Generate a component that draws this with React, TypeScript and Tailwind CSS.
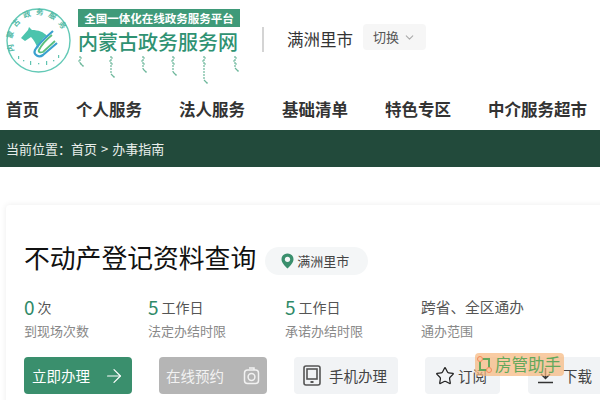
import { Star, ArrowRight, ChevronDown } from 'lucide-react';

const font = { fontFamily: '"Noto Sans CJK SC", "Liberation Sans", sans-serif' };

const navItems = ['个人服务', '法人服务', '基础清单', '特色专区', '中介服务超市'];

const stats = [
  { num: '0', unit: '次', label: '到现场次数', width: 'w-[124px]' },
  { num: '5', unit: '工作日', label: '法定办结时限', width: 'w-[137px]' },
  { num: '5', unit: '工作日', label: '承诺办结时限', width: 'w-[136px]' },
];

function Logo() {
  return (
    <svg width="74" height="80" viewBox="0 0 74 80" className="shrink-0">
      <defs>
        <path id="ring" d="M14 52 A26 26 0 1 1 61 52" fill="none" />
      </defs>
      <circle cx="37.5" cy="40.5" r="31.5" fill="none" stroke="#63c9b6" strokeWidth="1.4" />
      <text fontSize="7.5" fontWeight="700" fill="#4fb8a4" letterSpacing="4.6" style={font}>
        <textPath href="#ring" startOffset="1%">内蒙古政务服务</textPath>
      </text>
      <path d="M20 38 L27 30 L28 27 L31 30 C37 30 43 32 46 36 C41 38 39 42 37 49 C35 44 33 40 30 37 L24 41 Z" fill="#4cc4ad" />
      <path d="M52 31 C45 37 38 43 34 50 C32 55 38 58 42 55 L56 43" fill="none" stroke="#3aa0cf" strokeWidth="2.2" />
      <path d="M51 35 C46 39 41 44 38 50 C37 52 39 53 42 52 L54 41" fill="none" stroke="#58bf7d" strokeWidth="1.8" />
      <g fill="#62c4b1">
        <rect x="17" y="56" width="1.2" height="3" />
        <rect x="22" y="60" width="1.3" height="1.3" />
        <rect x="29" y="61" width="1.2" height="4" />
        <rect x="37" y="63" width="1.3" height="1.3" />
        <rect x="45" y="61" width="1.2" height="4" />
        <rect x="52" y="60" width="1.3" height="1.3" />
        <rect x="57" y="55" width="1.2" height="3" />
      </g>
    </svg>
  );
}

function MongolianMarks() {
  const marks = [
    { x: 2, h: 12 },
    { x: 33, h: 23 },
    { x: 65, h: 18 },
    { x: 95, h: 21 },
    { x: 126, h: 29 },
    { x: 157, h: 17 },
  ];
  return (
    <svg width="162" height="30" viewBox="0 0 162 30" className="block">
      {marks.map((m) => (
        <g key={m.x} stroke="#6db79b" strokeWidth="1.2" fill="none">
          <path d={`M${m.x} 1 V${m.h - 4}`} strokeDasharray="2 1" />
          <path d={`M${m.x} 3 h2 M${m.x} 6 h-2 M${m.x} 9 h2 M${m.x} ${m.h - 4} l3 3 M${m.x + 2} ${m.h - 1} h2`} />
        </g>
      ))}
    </svg>
  );
}

function CameraMark() {
  return (
    <svg width="17" height="18" viewBox="0 0 17 18" fill="none" stroke="#f2f2f2" strokeWidth="1.5">
      <rect x="1.5" y="3" width="14" height="13.5" rx="3" />
      <circle cx="8.5" cy="10" r="3.4" />
      <path d="M6 1 h5 v2" />
    </svg>
  );
}

function TabletMark() {
  return (
    <svg width="18" height="21" viewBox="0 0 18 21" fill="none" stroke="#555" strokeWidth="1.6">
      <rect x="1" y="1" width="16" height="19" rx="2" />
      <rect x="4" y="4" width="10" height="10" />
      <path d="M7.5 17 h3" strokeWidth="2" />
    </svg>
  );
}

function DownloadMark() {
  return (
    <svg width="17" height="17" viewBox="0 0 17 17" fill="none" stroke="#333" strokeWidth="1.5">
      <path d="M8.5 1 V11 M4 7 L8.5 11.5 L13 7" />
      <path d="M1 15.5 H16" />
    </svg>
  );
}

export default function App() {
  return (
    <div className="w-[600px] h-[400px] overflow-hidden bg-white relative" style={font}>
      <header className="h-[90px] flex items-start overflow-hidden">
        <div className="pl-[1px]">
          <Logo />
        </div>
        <div className="ml-[3px] pt-[9px] w-[162px] shrink-0">
          <div className="h-[18px] bg-[#3f9a79] text-white text-[11.5px] font-bold leading-[18px] text-center whitespace-nowrap">
            全国一体化在线政务服务平台
          </div>
          <div className="mt-[3px] text-[20px] leading-[24px] font-medium text-[#2f9272] whitespace-nowrap">内蒙古政务服务网</div>
          <div className="mt-[1px]">
            <MongolianMarks />
          </div>
        </div>
        <div className="ml-[22px] mt-[27px] w-[2px] h-[25px] bg-[#d4d4d4]" />
        <div className="ml-[23px] mt-[26px] text-[16.5px] leading-[26px] text-[#333] whitespace-nowrap">满洲里市</div>
        <div className="ml-[10px] mt-[24px] w-[63px] h-[26px] rounded bg-[#f6f6f6] flex items-center pl-[10px] gap-[4px] text-[13px] text-[#555]">
          切换
          <ChevronDown size={13} color="#aaa" />
        </div>
      </header>

      <nav className="h-[40px] flex items-center pl-[6px] pb-[2px] gap-[37px] text-[16.5px] font-bold text-[#333] whitespace-nowrap">
        <span>首页</span>
        {navItems.map((item) => (
          <span key={item}>{item}</span>
        ))}
      </nav>

      <div className="h-[37px] bg-[#224a3b] flex items-center pl-[6px] text-[13px] text-[#e8eeeb] whitespace-nowrap">
        <span>当前位置：</span>
        <span>首页</span>
        <span className="mx-[4px]">&gt;</span>
        <span>办事指南</span>
      </div>

      <main className="mt-[38px] ml-[6px] w-[620px] h-[220px] bg-white rounded-sm shadow-[0_0_6px_rgba(0,0,0,0.08)] pl-[18px] pt-[42px]">
        <div className="flex items-start h-[28px]">
          <h1 className="text-[25.8px] leading-[20px] text-[#111] whitespace-nowrap">不动产登记资料查询</h1>
          <div className="ml-[9px] w-[103px] h-[28px] rounded-full bg-[#f4f6f7] flex items-center pl-[16px] gap-[3px] text-[13px] text-[#444] whitespace-nowrap">
            <svg width="13" height="16" viewBox="0 0 13 16" className="shrink-0">
              <path d="M6.5 0.5 C3 0.5 0.5 3 0.5 6.3 C0.5 10 4.5 13.5 6.5 15.5 C8.5 13.5 12.5 10 12.5 6.3 C12.5 3 10 0.5 6.5 0.5 Z" fill="#3a8f6d" />
              <circle cx="6.5" cy="6.3" r="2.6" fill="#f4f6f7" />
            </svg>
            满洲里市
          </div>
        </div>

        <div className="mt-[20px] flex">
          {stats.map((s) => (
            <div key={s.label} className={s.width}>
              <div className="h-[24px] flex items-center gap-[3px] whitespace-nowrap">
                <span className="text-[19px] text-[#2f8a68]">{s.num}</span>
                <span className="text-[14px] text-[#555]">{s.unit}</span>
              </div>
              <div className="mt-[3px] text-[13px] leading-[18px] text-[#888] whitespace-nowrap">{s.label}</div>
            </div>
          ))}
          <div>
            <div className="h-[24px] flex items-center text-[14.7px] text-[#555] whitespace-nowrap">跨省、全区通办</div>
            <div className="mt-[3px] text-[13px] leading-[18px] text-[#888] whitespace-nowrap">通办范围</div>
          </div>
        </div>

        <div className="mt-[17px] flex items-center text-[14.5px] whitespace-nowrap">
          <button className="w-[108px] h-[37px] rounded-sm bg-[#3a8f6d] text-white flex items-center pl-[8px] pr-[7px] justify-between">
            立即办理
            <ArrowRight size={22} strokeWidth={1.3} />
          </button>
          <button className="ml-[27px] w-[108px] h-[37px] rounded-sm bg-[#b5b5b5] text-[#f2f2f2] flex items-center pl-[7px] pr-[7px] justify-between">
            在线预约
            <CameraMark />
          </button>
          <button className="ml-[27px] w-[104px] h-[37px] rounded-sm bg-[#f1f3f5] text-[#444] flex items-center pl-[9px] gap-[8px]">
            <TabletMark />
            手机办理
          </button>
          <button className="ml-[27px] w-[75px] h-[37px] rounded-sm bg-[#f1f3f5] text-[#444] flex items-center pl-[10px] gap-[3px]">
            <Star size={20} strokeWidth={1.5} color="#222" />
            订阅
          </button>
          <button className="ml-[28px] w-[75px] h-[37px] shrink-0 rounded-sm bg-[#f1f3f5] text-[#444] flex items-center pl-[9px] gap-[9px]">
            <DownloadMark />
            下载
          </button>
        </div>
      </main>

      <div className="absolute left-[475px] top-[353px] w-[89px] h-[23px] rounded bg-[#f6b77c]/70 flex items-center pl-[4px] gap-[5px] text-[16.5px] text-[#64a85c] whitespace-nowrap">
        <span className="relative w-[11px] h-[13px] border-2 border-[#64a85c] shrink-0">
          <span className="absolute -left-[4px] -top-[4px] w-[6px] h-[6px] rounded-full border border-[#f58a5a] bg-[#f6c9a0]" />
          <span className="absolute -right-[4px] -bottom-[4px] w-[6px] h-[6px] rounded-full border border-[#f58a5a] bg-[#f6c9a0]" />
        </span>
        房管助手
      </div>
    </div>
  );
}
